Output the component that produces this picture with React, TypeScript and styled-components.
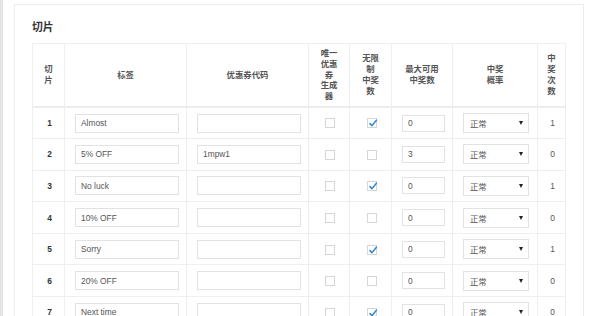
import React from "react";
import styled, { createGlobalStyle } from "styled-components";

const GlobalStyle = createGlobalStyle`
  html, body {
    margin: 0;
    padding: 0;
    background: #ffffff;
    overflow: hidden;
  }
  body {
    font-family: "Liberation Sans", "Noto Sans CJK SC", sans-serif;
    color: #333;
  }
`;

const Page = styled.div`
  display: flex;
  height: 316px;
  overflow: hidden;
`;

const SideStrip = styled.div`
  width: 3px;
  flex: none;
  background-color: #e4e4e4;
`;

const Main = styled.div`
  flex: 1;
  padding: 4px 17px 0 11px;
`;

const Card = styled.div`
  height: 100%;
  box-sizing: border-box;
  border: 1px solid #ececec;
  border-bottom: none;
  padding: 15px 17px 0 17px;
`;

const Title = styled.h4`
  margin: 0 0 9px 0;
  font-size: 10.8px;
  line-height: 14px;
  font-weight: 700;
  color: #333;
`;

const Table = styled.table`
  width: 533px;
  table-layout: fixed;
  border-collapse: collapse;
  border: 1px solid #efefef;
`;

const HeadCell = styled.th`
  border: 1px solid #efefef;
  border-bottom: 2px solid #ececec;
  height: 53px;
  padding: 4px 2px;
  text-align: center;
  vertical-align: middle;
  font-size: 8.4px;
  line-height: 10.8px;
  font-weight: 700;
  color: #555;
`;

const BodyCell = styled.td<{ bold?: boolean }>`
  border: 1px solid #efefef;
  height: 31.6px;
  box-sizing: border-box;
  padding: 0 8px 0 10px;
  text-align: center;
  vertical-align: middle;
  font-size: 8.4px;
  font-weight: ${(p) => (p.bold ? 700 : 400)};
  color: ${(p) => (p.bold ? "#333" : "#555")};
`;

const TextInput = styled.input`
  display: block;
  box-sizing: border-box;
  width: 104px;
  height: 19px;
  margin: 0;
  padding: 0 5px;
  border: 1px solid #e2e2e2;
  border-radius: 0;
  background: #fff;
  font-family: inherit;
  font-size: 8.4px;
  color: #555;
  outline: none;
`;

const NumberInput = styled(TextInput)`
  width: 43px;
  height: 17px;
  margin: 0 auto;
`;

const Select = styled.div`
  display: flex;
  align-items: center;
  justify-content: space-between;
  box-sizing: border-box;
  width: 66px;
  height: 20px;
  margin: 0 auto;
  padding: 0 5px 0 6px;
  border: 1px solid #e2e2e2;
  background: #fff;
  font-size: 8.4px;
  color: #555;
  text-align: left;
`;

const Caret = styled.span`
  width: 0;
  height: 0;
  border-left: 2px solid transparent;
  border-right: 2px solid transparent;
  border-top: 4px solid #222;
`;

const CheckBox = styled.span`
  position: relative;
  display: inline-block;
  width: 10px;
  height: 10px;
  box-sizing: border-box;
  border: 1px solid #d6d6d6;
  background: #fff;
  vertical-align: middle;

  svg {
    position: absolute;
    left: 0;
    top: -1px;
  }
`;

const Check = ({ checked }: { checked: boolean }) => (
  <CheckBox>
    {checked && (
      <svg width="10" height="10" viewBox="0 0 10 10">
        <path
          d="M2 5.6 L4 7.6 L8.4 2.2"
          fill="none"
          stroke="#2a86d6"
          strokeWidth="1.5"
          strokeLinecap="round"
          strokeLinejoin="round"
        />
      </svg>
    )}
  </CheckBox>
);

const headers: string[][] = [
  ["切", "片"],
  ["标签"],
  ["优惠券代码"],
  ["唯一", "优惠", "券", "生成", "器"],
  ["无限", "制", "中奖", "数"],
  ["最大可用", "中奖数"],
  ["中奖", "概率"],
  ["中", "奖", "次", "数"],
];

const widths = [32, 122, 122, 41, 42, 61, 85, 28];

interface Slice {
  label: string;
  code: string;
  unique: boolean;
  unlimited: boolean;
  max: string;
  count: number;
}

const slices: Slice[] = [
  { label: "Almost", code: "", unique: false, unlimited: true, max: "0", count: 1 },
  { label: "5% OFF", code: "1mpw1", unique: false, unlimited: false, max: "3", count: 0 },
  { label: "No luck", code: "", unique: false, unlimited: true, max: "0", count: 1 },
  { label: "10% OFF", code: "", unique: false, unlimited: false, max: "0", count: 0 },
  { label: "Sorry", code: "", unique: false, unlimited: true, max: "0", count: 1 },
  { label: "20% OFF", code: "", unique: false, unlimited: false, max: "0", count: 0 },
  { label: "Next time", code: "", unique: false, unlimited: true, max: "0", count: 0 },
];

export default function App() {
  return (
    <>
      <GlobalStyle />
      <Page>
        <SideStrip />
        <Main>
          <Card>
            <Title>切片</Title>
            <Table>
              <colgroup>
                {widths.map((w, i) => (
                  <col key={i} style={{ width: w }} />
                ))}
              </colgroup>
              <thead>
                <tr>
                  {headers.map((lines, i) => (
                    <HeadCell key={i}>
                      {lines.map((l, j) => (
                        <React.Fragment key={j}>
                          {j > 0 && <br />}
                          {l}
                        </React.Fragment>
                      ))}
                    </HeadCell>
                  ))}
                </tr>
              </thead>
              <tbody>
                {slices.map((s, i) => (
                  <tr key={i}>
                    <BodyCell bold>{i + 1}</BodyCell>
                    <BodyCell>
                      <TextInput defaultValue={s.label} readOnly />
                    </BodyCell>
                    <BodyCell>
                      <TextInput defaultValue={s.code} readOnly />
                    </BodyCell>
                    <BodyCell>
                      <Check checked={s.unique} />
                    </BodyCell>
                    <BodyCell>
                      <Check checked={s.unlimited} />
                    </BodyCell>
                    <BodyCell>
                      <NumberInput defaultValue={s.max} readOnly />
                    </BodyCell>
                    <BodyCell>
                      <Select>
                        <span>正常</span>
                        <Caret />
                      </Select>
                    </BodyCell>
                    <BodyCell>{s.count}</BodyCell>
                  </tr>
                ))}
              </tbody>
            </Table>
          </Card>
        </Main>
      </Page>
    </>
  );
}
